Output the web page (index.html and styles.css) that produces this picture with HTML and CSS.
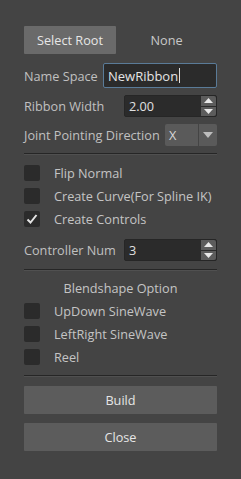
FILE: index.html
```html
<!DOCTYPE html>
<html>
<head>
<meta charset="utf-8">
<link rel="stylesheet" href="styles.css">
</head>
<body>
<div class="panel">
  <div class="row-top">
    <div class="btn btn-root">Select Root</div>
    <div class="none">None</div>
  </div>

  <div class="field r-name">
    <span class="label">Name Space</span>
    <div class="textbox">NewRibbon<span class="caret"></span></div>
  </div>

  <div class="field r-width">
    <span class="label">Ribbon Width</span>
    <div class="spin">
      <span class="spin-val">2.00</span>
      <div class="spin-btns">
        <div class="sb up"><svg width="9" height="5" viewBox="0 0 9 5"><path d="M0 5 L4.5 0 L9 5 Z" fill="#e8e8e8"/></svg></div>
        <div class="sb down"><svg width="9" height="5" viewBox="0 0 9 5"><path d="M0 0 L4.5 5 L9 0 Z" fill="#e8e8e8"/></svg></div>
      </div>
    </div>
  </div>

  <div class="field r-joint">
    <span class="label">Joint Pointing Direction</span>
    <div class="combo">
      <span class="combo-val">X</span>
      <span class="combo-arrow"><svg width="10" height="6" viewBox="0 0 10 6"><path d="M0 0 L5 6 L10 0 Z" fill="#bdbdbd"/></svg></span>
    </div>
  </div>

  <div class="sep s1"></div>

  <div class="check c1"><span class="box"></span><span class="ctext">Flip Normal</span></div>
  <div class="check c2"><span class="box"></span><span class="ctext">Create Curve(For Spline IK)</span></div>
  <div class="check c2"><span class="box"><svg width="16" height="16" viewBox="0 0 16 16"><path d="M3.5 8.5 L6.5 11.5 L12.5 4" stroke="#e4e4e4" stroke-width="2" fill="none"/></svg></span><span class="ctext">Create Controls</span></div>

  <div class="field r-ctrl">
    <span class="label">Controller Num</span>
    <div class="spin">
      <span class="spin-val">3</span>
      <div class="spin-btns">
        <div class="sb up"><svg width="9" height="5" viewBox="0 0 9 5"><path d="M0 5 L4.5 0 L9 5 Z" fill="#e8e8e8"/></svg></div>
        <div class="sb down"><svg width="9" height="5" viewBox="0 0 9 5"><path d="M0 0 L4.5 5 L9 0 Z" fill="#e8e8e8"/></svg></div>
      </div>
    </div>
  </div>

  <div class="sep s2"></div>

  <div class="heading">Blendshape Option</div>

  <div class="check c3"><span class="box"></span><span class="ctext">UpDown SineWave</span></div>
  <div class="check c2"><span class="box"></span><span class="ctext">LeftRight SineWave</span></div>
  <div class="check c2"><span class="box"></span><span class="ctext">Reel</span></div>

  <div class="sep s3"></div>

  <div class="btn wide b1">Build</div>
  <div class="btn wide b2">Close</div>
</div>
</body>
</html>
```

FILE: styles.css
```css
html, body {
  margin: 0;
  padding: 0;
  background: #444444;
  width: 241px;
  height: 479px;
  overflow: hidden;
}
.panel {
  padding: 26px 24px 0 24px;
  font-family: "Open Sans", "Noto Sans", sans-serif;
  font-size: 12.7px;
  color: #c4c4c4;
  display: flex;
  flex-direction: column;
}
.row-top {
  display: flex;
  align-items: center;
  height: 28px;
}
.btn {
  background: #6a6a6a;
  color: #e6e6e6;
  display: flex;
  align-items: center;
  justify-content: center;
  border-radius: 1px;
}
.btn-root {
  width: 92px;
  height: 28px;
}
.none {
  flex: 1;
  text-align: center;
  color: #c8c8c8;
}
.field {
  display: flex;
  align-items: center;
  justify-content: space-between;
}
.label {
  color: #c0c0c0;
  white-space: nowrap;
}
.r-name { margin-top: 9px; height: 25px; }
.textbox {
  box-sizing: border-box;
  width: 114px;
  height: 25px;
  background: #2b2b2b;
  border: 1px solid #5a7b98;
  border-radius: 2px;
  color: #e4e4e4;
  padding-left: 4px;
  display: flex;
  align-items: center;
  font-size: 13px;
}
.caret {
  display: inline-block;
  width: 1px;
  height: 15px;
  background: #e0e0e0;
  margin-left: 1px;
}
.r-width { margin-top: 7px; height: 22px; }
.r-ctrl { margin-top: 12px; height: 22px; }
.spin {
  box-sizing: border-box;
  width: 93px;
  height: 22px;
  background: #2b2b2b;
  border: 1px solid #262626;
  border-radius: 2px;
  display: flex;
  align-items: center;
  justify-content: space-between;
}
.spin-val {
  padding-left: 4px;
  color: #e0e0e0;
}
.spin-btns {
  width: 15px;
  height: 20px;
  display: flex;
  flex-direction: column;
  gap: 1px;
}
.sb {
  flex: 1;
  background: #5c5c5c;
  display: flex;
  align-items: center;
  justify-content: center;
}
.sb.up { border-top-right-radius: 2px; }
.sb.down { border-bottom-right-radius: 2px; }
.r-joint { margin-top: 7px; height: 22px; }
.combo {
  width: 52px;
  height: 22px;
  display: flex;
  gap: 1px;
}
.combo-val {
  flex: 1;
  background: #5a5a5a;
  border-radius: 2px 0 0 2px;
  color: #d8d8d8;
  padding-left: 4px;
  display: flex;
  align-items: center;
}
.combo-arrow {
  width: 18px;
  background: #5a5a5a;
  border-radius: 0 2px 2px 0;
  display: flex;
  align-items: center;
  justify-content: center;
}
.sep {
  height: 1px;
  background: #262626;
  border-bottom: 1px solid #505050;
}
.s1 { margin-top: 7px; }
.s2 { margin-top: 8px; }
.s3 { margin-top: 10px; }
.check {
  display: flex;
  align-items: center;
  height: 16px;
}
.c1 { margin-top: 10px; }
.c2 { margin-top: 7px; }
.c3 { margin-top: 7px; }
.box {
  width: 16px;
  height: 16px;
  background: #2b2b2b;
  border-radius: 2px;
  flex: none;
  display: flex;
}
.ctext {
  margin-left: 14px;
  color: #c4c4c4;
  white-space: nowrap;
}
.heading {
  margin-top: 9px;
  height: 16px;
  line-height: 16px;
  text-align: center;
  color: #c4c4c4;
}
.wide {
  height: 28px;
}
.b1 { margin-top: 9px; background: #5c5c5c; }
.b2 { margin-top: 9px; background: #5c5c5c; }
```
